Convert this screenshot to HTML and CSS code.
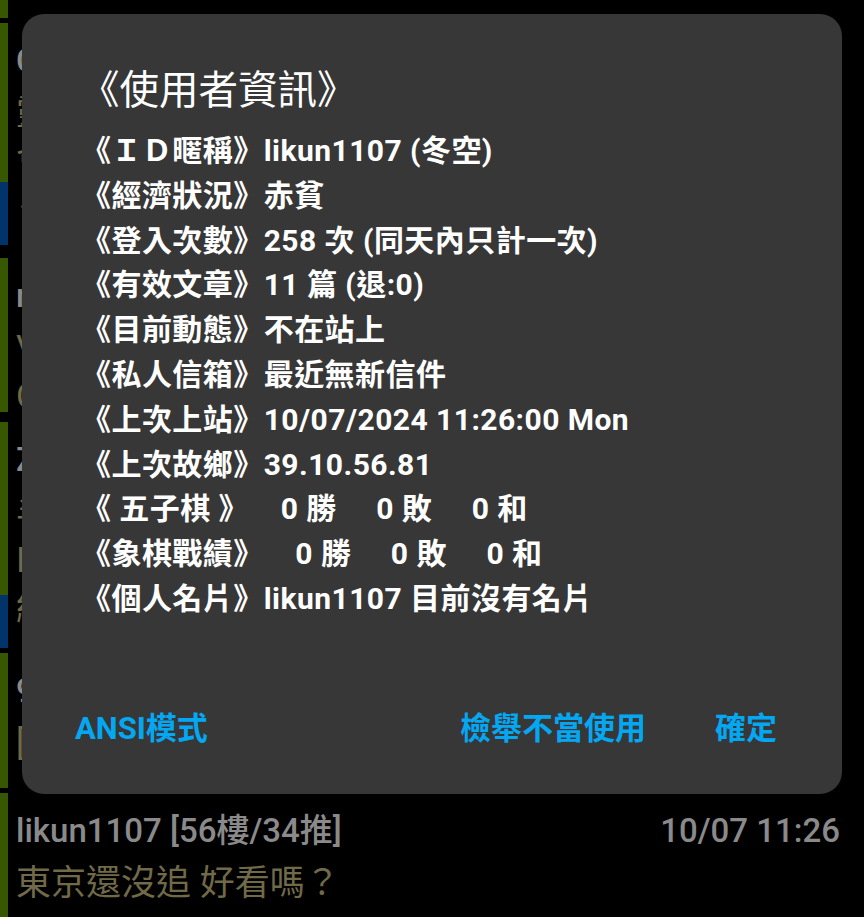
FILE: index.html
```html
<!DOCTYPE html>
<html lang="zh-Hant">
<head>
<meta charset="utf-8">
<title>使用者資訊</title>
<link rel="stylesheet" href="styles.css">
</head>
<body>
<div class="screen">
  <div class="feed">
    <div class="item item-1">
      <div class="bar"><div class="seg green"></div></div>
      <div class="content"></div>
    </div>
    <div class="item item-2">
      <div class="bar"><div class="seg green"></div><div class="seg blue seg-b2"></div></div>
      <div class="content">
        <div class="user-row"><span class="user">Cielo [52樓/30推]</span></div>
        <div class="msg">靈魂的顏色</div>
        <div class="msg">會不會太快</div>
        <div class="msg">巜這樣也行</div>
      </div>
    </div>
    <div class="item item-3">
      <div class="bar"><div class="seg green"></div></div>
      <div class="content">
        <div class="user-row"><span class="user">ray0825 [53樓/31推]</span></div>
        <div class="msg">V字仇殺隊</div>
        <div class="msg">Cool</div>
      </div>
    </div>
    <div class="item item-4">
      <div class="bar"><div class="seg green"></div><div class="seg blue seg-b4"></div></div>
      <div class="content">
        <div class="user-row"><span class="user">Zeta [54樓/32推]</span></div>
        <div class="msg">丰收的季節</div>
        <div class="msg">I see</div>
        <div class="msg">結局還不錯</div>
      </div>
    </div>
    <div class="item item-5">
      <div class="bar"><div class="seg green"></div></div>
      <div class="content">
        <div class="user-row"><span class="user">9527 [55樓/33推]</span></div>
        <div class="msg">[推]</div>
      </div>
    </div>
    <div class="item item-6">
      <div class="bar"><div class="seg green"></div></div>
      <div class="content">
        <div class="user-row">
          <span class="user">likun1107 [56樓/34推]</span>
          <span class="time">10/07 11:26</span>
        </div>
        <div class="msg">東京還沒追 好看嗎？</div>
      </div>
    </div>
  </div>

  <div class="dialog">
    <div class="title">《使用者資訊》</div>
    <div class="rows">
      <div class="row">《ＩＤ暱稱》likun1107 (冬空)</div>
      <div class="row">《經濟狀況》赤貧</div>
      <div class="row">《登入次數》258 次 (同天內只計一次)</div>
      <div class="row">《有效文章》11 篇 (退:0)</div>
      <div class="row">《目前動態》不在站上</div>
      <div class="row">《私人信箱》最近無新信件</div>
      <div class="row">《上次上站》10/07/2024 11:26:00 Mon</div>
      <div class="row">《上次故鄉》39.10.56.81</div>
      <div class="row">《 五子棋 》    0 勝     0 敗     0 和</div>
      <div class="row">《象棋戰績》    0 勝     0 敗     0 和</div>
      <div class="row">《個人名片》likun1107 目前沒有名片</div>
    </div>
    <div class="actions">
      <span class="btn">ANSI模式</span>
      <div class="actions-right">
        <span class="btn">檢舉不當使用</span>
        <span class="btn">確定</span>
      </div>
    </div>
  </div>
</div>
</body>
</html>
```

FILE: styles.css
```css
* { box-sizing: border-box; }

html, body {
  margin: 0;
  padding: 0;
  background: #000;
}

body {
  font-family: Roboto, "Noto Sans CJK TC", "Noto Sans", sans-serif;
  color: #fff;
}

.screen {
  position: relative;
  width: 864px;
  height: 917px;
  overflow: hidden;
  background: #000;
}

/* background comment feed */
.feed {
  display: flex;
  flex-direction: column;
}

.item {
  display: flex;
  overflow: hidden;
}

.item-1 { height: 18px; margin-bottom: 5px; }
.item-2 { height: 222px; margin-bottom: 13px; }
.item-3 { height: 154px; margin-bottom: 10px; }
.item-4 { height: 226px; margin-bottom: 5px; }
.item-5 { height: 135px; margin-bottom: 5px; }
.item-6 { height: 124px; }

.bar {
  width: 8px;
  display: flex;
  flex-direction: column;
  flex: none;
}

.seg.green { background: #375800; flex: 1; }
.seg.blue { background: #00346a; }
.seg-b2 { height: 63px; }
.seg-b4 { height: 53px; }

.content {
  flex: 1;
  padding: 18px 24px 0 8px;
  display: flex;
  flex-direction: column;
}

.user-row {
  display: flex;
  justify-content: space-between;
  align-items: baseline;
  margin-bottom: 9px;
}

.user,
.time {
  color: #8a8a8a;
  font-size: 33px;
  line-height: 40px;
  font-weight: 500;
}

.msg {
  color: #716a48;
  font-size: 35px;
  line-height: 48px;
  white-space: nowrap;
}

/* dialog overlay */
.dialog {
  position: absolute;
  left: 22px;
  top: 14px;
  width: 820px;
  height: 780px;
  background: #373737;
  border-radius: 22px;
  padding: 52px 65px 45px 66px;
  display: flex;
  flex-direction: column;
}

.title {
  font-size: 39.5px;
  line-height: 50px;
  font-weight: 400;
  margin-left: -8px;
}

.rows {
  margin-top: 13px;
  display: flex;
  flex-direction: column;
}

.row {
  font-size: 30px;
  line-height: 44.8px;
  font-weight: 700;
  letter-spacing: 0.45px;
  white-space: pre;
  margin-left: -7px;
}

.actions {
  margin-top: auto;
  margin-left: -13px;
  display: flex;
  justify-content: space-between;
  align-items: center;
}

.actions-right {
  display: flex;
  gap: 69px;
}

.btn {
  color: #04a7f2;
  font-size: 31px;
  line-height: 40px;
  font-weight: 700;
}
```
